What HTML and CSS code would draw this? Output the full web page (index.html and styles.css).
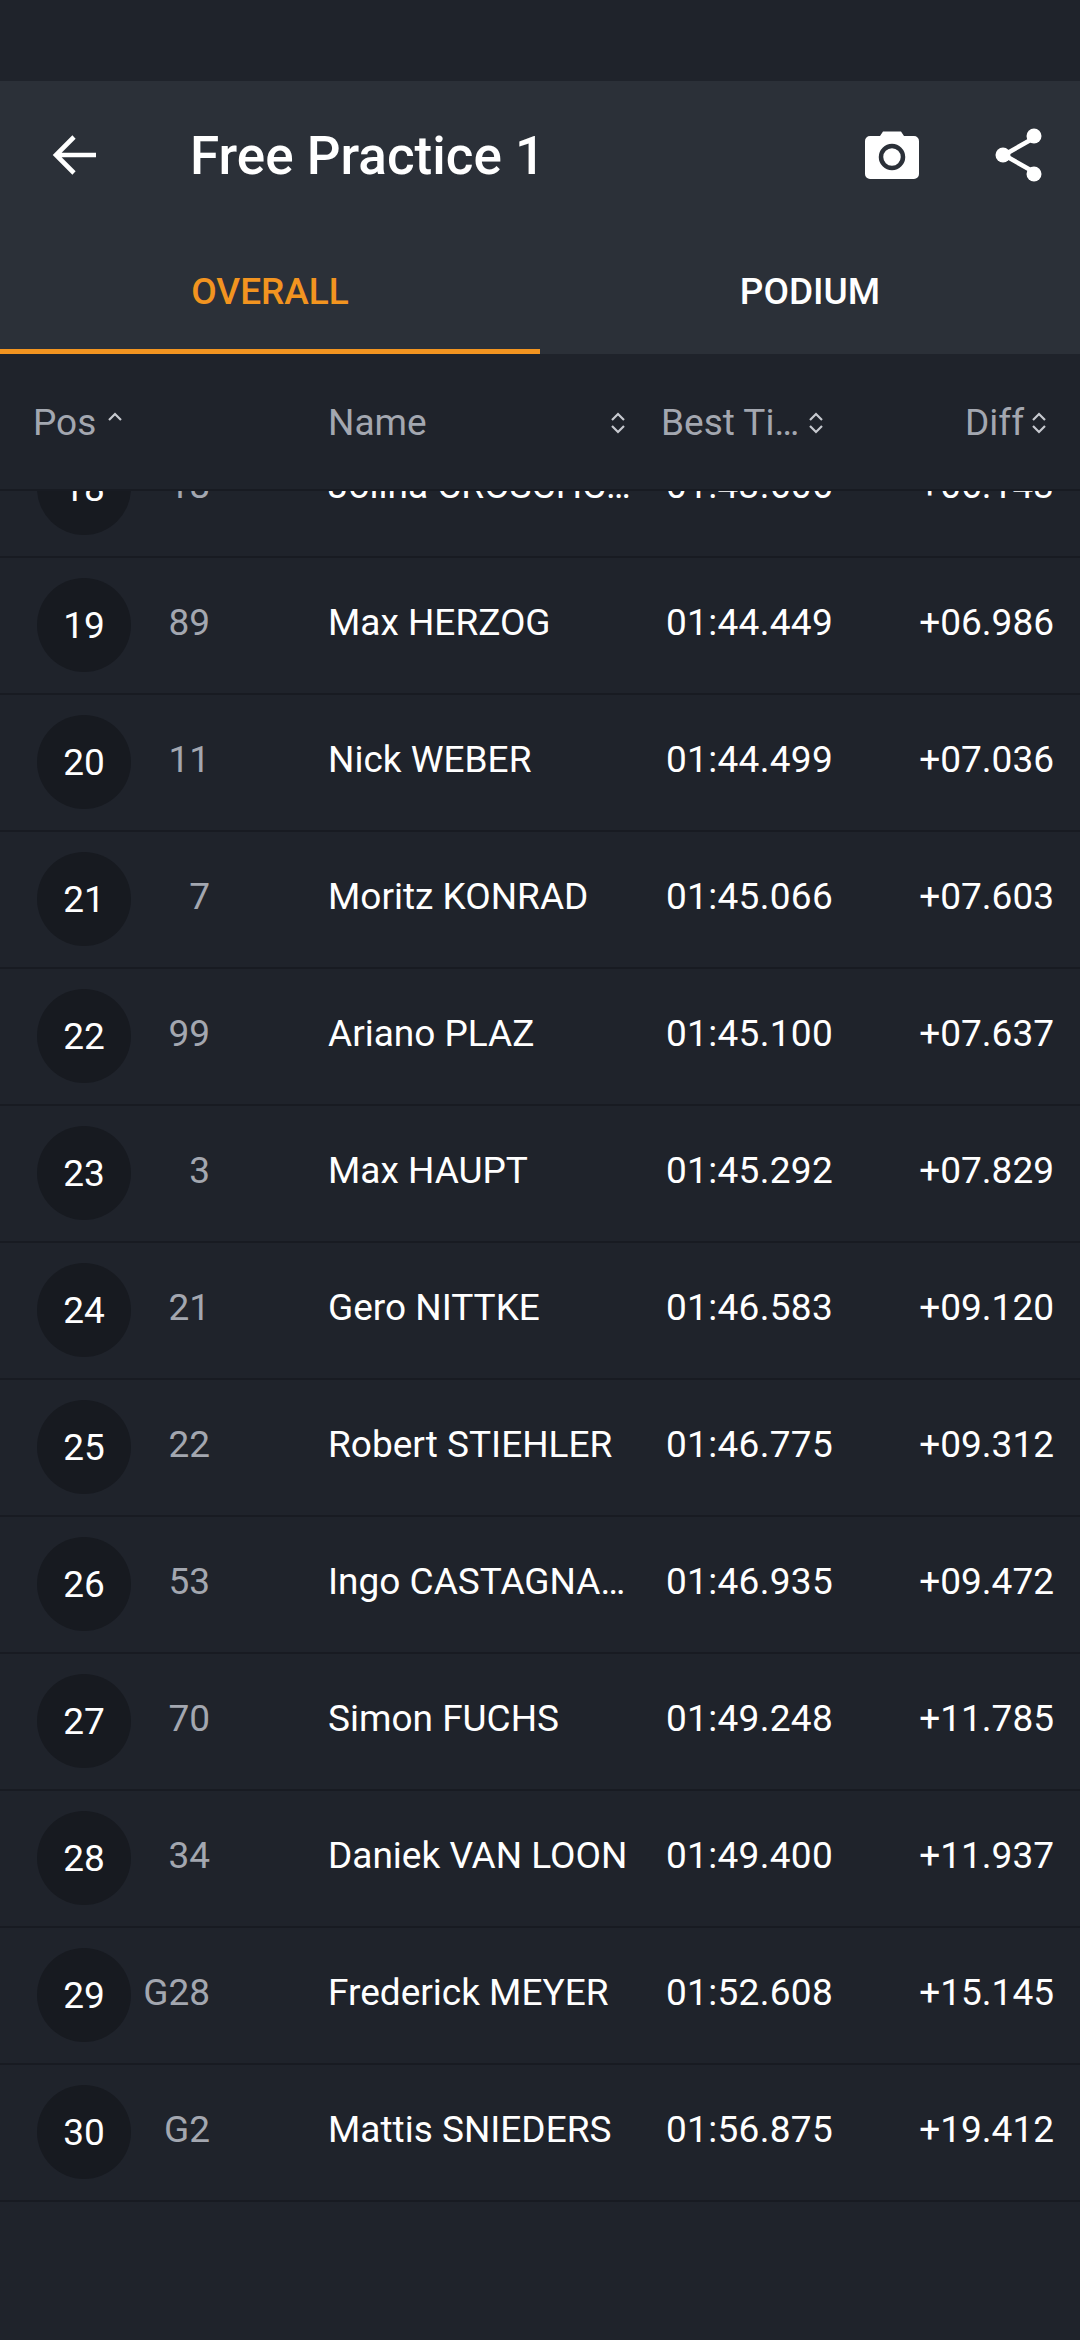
FILE: index.html
```html
<!DOCTYPE html>
<html lang="en">
<head>
<meta charset="utf-8">
<title>Free Practice 1</title>
<link rel="stylesheet" href="styles.css">
</head>
<body>
<div class="status"></div>
<header class="appbar">
  <div class="toolbar">
    <svg class="back" viewBox="0 0 48 48"><path d="M46 24H7M24 6 6 24l18 18" fill="none" stroke="#fff" stroke-width="4.600"/></svg>
    <h1 class="title">Free Practice 1</h1>
    <svg class="camera" viewBox="0 0 54 48"><path d="M5 5h10l3-4.500h18l3 4.500h10a5 5 0 0 1 5 5v33a5 5 0 0 1-5 5H5a5 5 0 0 1-5-5V10a5 5 0 0 1 5-5z" fill="#fff"/><circle cx="27" cy="26" r="11" fill="#fff" stroke="#2b3038" stroke-width="4.500"/></svg>
    <svg class="share" viewBox="0 0 48 54"><path d="M39 10 9 27l30 17" fill="none" stroke="#fff" stroke-width="4.500"/><circle cx="39" cy="8" r="7.500" fill="#fff"/><circle cx="8" cy="27" r="7.500" fill="#fff"/><circle cx="39" cy="46" r="7.500" fill="#fff"/></svg>
  </div>
  <nav class="tabs">
    <div class="tab active">OVERALL</div>
    <div class="tab">PODIUM</div>
  </nav>
</header>
<div class="thead">
  <div class="th c-pos">Pos <svg class="sort" viewBox="0 0 16 24"><path d="M2 9l6-6 6 6" /></svg></div>
  <div class="th c-name"><span>Name</span><svg class="sort" viewBox="0 0 16 24"><path d="M2 9l6-6 6 6M2 15l6 6 6-6" /></svg></div>
  <div class="th c-time"><span>Best Ti…</span><svg class="sort" viewBox="0 0 16 24"><path d="M2 9l6-6 6 6M2 15l6 6 6-6" /></svg></div>
  <div class="th c-diff"><span>Diff</span><svg class="sort" viewBox="0 0 16 24"><path d="M2 9l6-6 6 6M2 15l6 6 6-6" /></svg></div>
</div>
<main class="list">
  <div class="row first"><div class="badge">18</div><div class="num">18</div><div class="name">Jolina CROSCHC…</div><div class="time">01:43.606</div><div class="diff">+06.143</div></div>
  <div class="row"><div class="badge">19</div><div class="num">89</div><div class="name">Max HERZOG</div><div class="time">01:44.449</div><div class="diff">+06.986</div></div>
  <div class="row"><div class="badge">20</div><div class="num">11</div><div class="name">Nick WEBER</div><div class="time">01:44.499</div><div class="diff">+07.036</div></div>
  <div class="row"><div class="badge">21</div><div class="num">7</div><div class="name">Moritz KONRAD</div><div class="time">01:45.066</div><div class="diff">+07.603</div></div>
  <div class="row"><div class="badge">22</div><div class="num">99</div><div class="name">Ariano PLAZ</div><div class="time">01:45.100</div><div class="diff">+07.637</div></div>
  <div class="row"><div class="badge">23</div><div class="num">3</div><div class="name">Max HAUPT</div><div class="time">01:45.292</div><div class="diff">+07.829</div></div>
  <div class="row"><div class="badge">24</div><div class="num">21</div><div class="name">Gero NITTKE</div><div class="time">01:46.583</div><div class="diff">+09.120</div></div>
  <div class="row"><div class="badge">25</div><div class="num">22</div><div class="name">Robert STIEHLER</div><div class="time">01:46.775</div><div class="diff">+09.312</div></div>
  <div class="row"><div class="badge">26</div><div class="num">53</div><div class="name">Ingo CASTAGNA…</div><div class="time">01:46.935</div><div class="diff">+09.472</div></div>
  <div class="row"><div class="badge">27</div><div class="num">70</div><div class="name">Simon FUCHS</div><div class="time">01:49.248</div><div class="diff">+11.785</div></div>
  <div class="row"><div class="badge">28</div><div class="num">34</div><div class="name">Daniek VAN LOON</div><div class="time">01:49.400</div><div class="diff">+11.937</div></div>
  <div class="row"><div class="badge">29</div><div class="num">G28</div><div class="name">Frederick MEYER</div><div class="time">01:52.608</div><div class="diff">+15.145</div></div>
  <div class="row"><div class="badge">30</div><div class="num">G2</div><div class="name">Mattis SNIEDERS</div><div class="time">01:56.875</div><div class="diff">+19.412</div></div>
</main>
</body>
</html>
```
FILE: styles.css
```css
* { box-sizing: border-box; margin: 0; padding: 0; }
html, body { height: 100%; }
body {
  width: 1080px;
  height: 2340px;
  overflow: hidden;
  background: #1f232b;
  font-family: Roboto, "Liberation Sans", sans-serif;
  color: #fff;
  display: flex;
  flex-direction: column;
}
.status { height: 81px; flex: none; background: #1f232b; }
.appbar { height: 273px; flex: none; background: #2b3038; display: flex; flex-direction: column; }
.toolbar { height: 148px; display: flex; align-items: center; padding: 0 37px 0 50px; flex: none; }
.back { width: 48px; height: 48px; flex: none; }
.title { font-size: 53px; font-weight: 500; margin-left: 92px; flex: 1; line-height: 60px; position: relative; top: 1px; }
.camera { width: 54px; height: 48px; flex: none; margin-right: 76px; }
.share { width: 48px; height: 54px; flex: none; }
.tabs { flex: 1; display: flex; }
.tab {
  flex: 1;
  display: flex;
  align-items: center;
  justify-content: center;
  font-size: 37px;
  font-weight: 500;
  padding-top: 4px;
  border-bottom: 5px solid transparent;
}
.tab.active { color: #f29420; border-bottom-color: #f29420; }
.thead { height: 137px; flex: none; display: flex; align-items: center; color: #a3a7b0; font-size: 37px; padding-top: 2px; border-bottom: 2px solid #181b22; position: relative; z-index: 1; background: #1f232b; }
.th { display: flex; align-items: center; }
.c-pos { width: 328px; padding-left: 33px; gap: 11px; }
.c-name { width: 298px; justify-content: space-between; }
.c-time { width: 206px; margin-left: 35px; gap: 9px; }
.c-diff { width: 213px; justify-content: flex-end; gap: 7px; padding-right: 33px; }
.sort { width: 16px; height: 24px; flex: none; }
.sort path { fill: none; stroke: #c6c9cf; stroke-width: 2.200; }
.list { flex: 1; overflow: hidden; }
.row { height: 137px; display: flex; align-items: center; border-bottom: 2px solid #181b22; font-size: 37px; }
.row.first { margin-top: -70px; }
.badge { width: 94px; height: 94px; border-radius: 50%; background: #171a20; margin-left: 37px; display: flex; align-items: center; justify-content: center; position: relative; top: -1px; flex: none; padding-top: 2px; }
.num { width: 79px; text-align: right; color: #a3a7b0; margin-right: 118px; flex: none; position: relative; top: -3px; }
.name { width: 338px; flex: none; white-space: nowrap; position: relative; top: -3px; }
.time { width: 167px; flex: none; position: relative; top: -3px; white-space: nowrap; letter-spacing: 0.3px; }
.diff { flex: 1; text-align: right; padding-right: 26px; position: relative; top: -3px; }
```
